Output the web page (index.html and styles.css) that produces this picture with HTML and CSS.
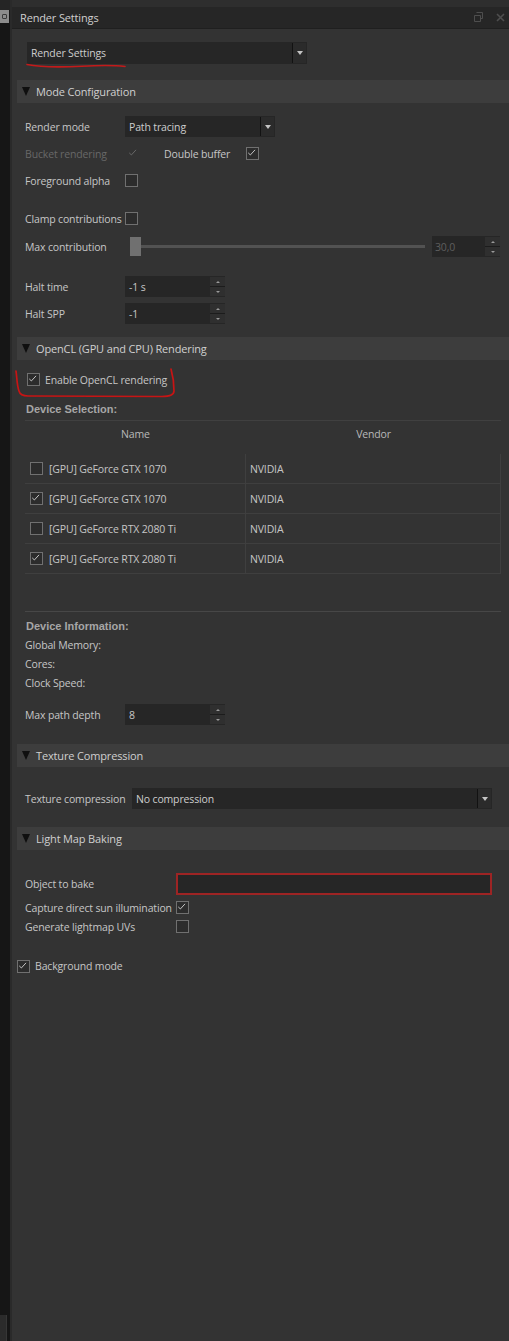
FILE: index.html
```html
<!DOCTYPE html>
<html>
<head>
<meta charset="utf-8">
<title>Render Settings</title>
<link rel="stylesheet" href="styles.css">
</head>
<body>
<div class="app">
  <aside class="dock-strip">
    <div class="strip-top"></div>
    <div class="strip-icon"><span></span></div>
    <div class="strip-fill"></div>
    <div class="strip-foot"></div>
  </aside>

  <main class="panel">
    <div class="topband"></div>
    <header class="titlebar">
      <span class="title">Render Settings</span>
      <span class="tb-icons">
        <svg class="tb-float" width="9" height="10" viewBox="0 0 9 10"><path d="M2.5 0.5h6v6h-2M0.5 3.5h6v6h-6z" fill="none" stroke="#4e4e4e" stroke-width="1"/></svg>
        <svg class="tb-close" width="9" height="9" viewBox="0 0 9 9"><path d="M1 1l7 7M8 1l-7 7" stroke="#4e4e4e" stroke-width="1.6"/></svg>
      </span>
    </header>

    <div class="content">
      <div class="preset-wrap">
        <div class="combo preset"><span class="combo-text">Render Settings</span><span class="combo-btn"><i class="tri"></i></span></div>
        <svg class="mark-underline" width="120" height="8" viewBox="0 0 120 8"><path d="M15 3.5 C 25 5.5, 45 6.5, 70 5.2 S 105 4.5, 113 5.5" fill="none" stroke="#c41a1a" stroke-width="1.6" stroke-linecap="round"/></svg>
      </div>

      <div class="section-h sh-mode"><i class="caret"></i>Mode Configuration</div>

      <div class="row r-render">
        <span class="lbl">Render mode</span>
        <div class="combo rmode"><span class="combo-text">Path tracing</span><span class="combo-btn"><i class="tri"></i></span></div>
      </div>
      <div class="row">
        <span class="lbl disabled">Bucket rendering</span>
        <span class="cb cb-disabled"><svg viewBox="0 0 13 13"><polyline points="2.5,6.8 5,9.2 10.5,3.2"/></svg></span>
        <span class="lbl-db">Double buffer</span>
        <span class="cb"><svg viewBox="0 0 13 13"><polyline points="2.5,6.8 5,9.2 10.5,3.2"/></svg></span>
      </div>
      <div class="row">
        <span class="lbl">Foreground alpha</span>
        <span class="cb"></span>
      </div>
      <div class="row r-clamp">
        <span class="lbl">Clamp contributions</span>
        <span class="cb"></span>
      </div>
      <div class="row r-max">
        <span class="lbl">Max contribution</span>
        <div class="slider"><span class="thumb"></span><span class="track"></span></div>
        <div class="spin spin-max disabled"><span class="spin-val">30,0</span><span class="spin-btns"><i class="up"></i><i class="dn"></i></span></div>
      </div>
      <div class="row r-halt">
        <span class="lbl">Halt time</span>
        <div class="spin"><span class="spin-val">-1 s</span><span class="spin-btns"><i class="up"></i><i class="dn"></i></span></div>
      </div>
      <div class="row">
        <span class="lbl">Halt SPP</span>
        <div class="spin"><span class="spin-val">-1</span><span class="spin-btns"><i class="up"></i><i class="dn"></i></span></div>
      </div>

      <div class="section-h sh-ocl"><i class="caret"></i>OpenCL (GPU and CPU) Rendering</div>

      <div class="row r-enable">
        <span class="cb"><svg viewBox="0 0 13 13"><polyline points="2.5,6.8 5,9.2 10.5,3.2"/></svg></span>
        <span class="cb-text">Enable OpenCL rendering</span>
        <svg class="mark-loop" width="170" height="34" viewBox="0 0 170 34"><path d="M4 5 C 5 12, 5 20, 7 25 C 8 29, 11 30, 16 30 L 150 30.5 C 158 30.5, 162 29, 162 25 C 162 18, 161 10, 159 3" fill="none" stroke="#c81414" stroke-width="1.7" stroke-linecap="round"/></svg>
      </div>

      <div class="subhead sh-devsel">Device Selection:</div>

      <div class="devices">
        <div class="dev-head"><span>Name</span><span>Vendor</span></div>
        <div class="dev-rows">
          <div class="dev-row"><span class="dev-name"><span class="cb"></span>[GPU] GeForce GTX 1070</span><span class="dev-vendor">NVIDIA</span></div>
          <div class="dev-row"><span class="dev-name"><span class="cb"><svg viewBox="0 0 13 13"><polyline points="2.5,6.8 5,9.2 10.5,3.2"/></svg></span>[GPU] GeForce GTX 1070</span><span class="dev-vendor">NVIDIA</span></div>
          <div class="dev-row"><span class="dev-name"><span class="cb"></span>[GPU] GeForce RTX 2080 Ti</span><span class="dev-vendor">NVIDIA</span></div>
          <div class="dev-row"><span class="dev-name"><span class="cb"><svg viewBox="0 0 13 13"><polyline points="2.5,6.8 5,9.2 10.5,3.2"/></svg></span>[GPU] GeForce RTX 2080 Ti</span><span class="dev-vendor">NVIDIA</span></div>
        </div>
      </div>

      <div class="divider"></div>

      <div class="info">
        <div class="subhead info-head">Device Information:</div>
        <div class="info-line">Global Memory:</div>
        <div class="info-line">Cores:</div>
        <div class="info-line">Clock Speed:</div>
      </div>

      <div class="row r-depth">
        <span class="lbl">Max path depth</span>
        <div class="spin"><span class="spin-val">8</span><span class="spin-btns"><i class="up"></i><i class="dn"></i></span></div>
      </div>

      <div class="section-h sh-tex"><i class="caret"></i>Texture Compression</div>

      <div class="row r-tex">
        <span class="lbl lbl-tex">Texture compression</span>
        <div class="combo tcomp"><span class="combo-text">No compression</span><span class="combo-btn"><i class="tri"></i></span></div>
      </div>

      <div class="section-h sh-lm"><i class="caret"></i>Light Map Baking</div>

      <div class="row r-obj">
        <span class="lbl lbl-lm">Object to bake</span>
        <div class="text-input invalid"></div>
      </div>
      <div class="row r-small r-capture">
        <span class="lbl lbl-lm">Capture direct sun illumination</span>
        <span class="cb"><svg viewBox="0 0 13 13"><polyline points="2.5,6.8 5,9.2 10.5,3.2"/></svg></span>
      </div>
      <div class="row r-small">
        <span class="lbl lbl-lm">Generate lightmap UVs</span>
        <span class="cb"></span>
      </div>

      <div class="row r-bg">
        <span class="cb"><svg viewBox="0 0 13 13"><polyline points="2.5,6.8 5,9.2 10.5,3.2"/></svg></span>
        <span class="cb-text">Background mode</span>
      </div>
    </div>
  </main>
</div>
</body>
</html>
```

FILE: styles.css
```css
* { box-sizing: border-box; margin: 0; padding: 0; }

html, body { height: 100%; }

body {
  background: #333333;
  color: #c6c6c6;
  font-family: "Open Sans", "Noto Sans", "DejaVu Sans", sans-serif;
  font-size: 10.5px;
  letter-spacing: -0.15px;
  overflow: hidden;
}

.app {
  display: flex;
  height: 1341px;
}

/* left dock strip */
.dock-strip {
  width: 12px;
  flex: none;
  display: flex;
  flex-direction: column;
  background: #161616;
  border-right: 2px solid #2a2a2a;
}
.strip-top { height: 10px; background: #252525; }
.strip-icon {
  height: 13px;
  width: 9px;
  background: #8c8c8c;
  display: flex;
  align-items: center;
  justify-content: center;
}
.strip-icon span {
  width: 5px;
  height: 5px;
  border: 1px solid #3a3a3a;
  border-radius: 1px;
}
.strip-fill { flex: 1; }
.strip-foot {
  height: 26px;
  width: 7px;
  margin-top: 3px;
  background: #2b2b2b;
  border-right: 1px solid #363636;
}

/* panel */
.panel {
  flex: 1;
  display: flex;
  flex-direction: column;
  min-width: 0;
}
.topband { height: 7px; background: #2e2e2e; }
.titlebar {
  height: 22px;
  background: #262626;
  border-bottom: 1px solid #1f1f1f;
  display: flex;
  align-items: center;
  justify-content: space-between;
  padding: 0 4px 1px 8px;
  font-size: 11px;
  color: #cfcfcf;
}
.tb-icons { display: flex; align-items: center; gap: 13px; }

.content {
  display: flex;
  flex-direction: column;
}

/* preset combo with annotation */
.preset-wrap {
  position: relative;
  margin-top: 13px;
  height: 22px;
}
.mark-underline {
  position: absolute;
  left: 0;
  top: 19px;
  overflow: visible;
}

.combo {
  display: flex;
  align-items: stretch;
  background: #262626;
  height: 22px;
}
.combo-text {
  flex: 1;
  display: flex;
  align-items: center;
  padding-left: 4px;
  color: #cdcdcd;
}
.combo-btn {
  width: 14px;
  flex: none;
  border-left: 1px solid #121212;
  background: #2b2b2b;
  display: flex;
  align-items: center;
  justify-content: center;
  margin: 1px 1px 1px 0;
}
.tri {
  width: 0;
  height: 0;
  border-left: 3.5px solid transparent;
  border-right: 3.5px solid transparent;
  border-top: 4px solid #c4c4c4;
}
.preset { margin-left: 15px; width: 280px; }
.rmode { width: 150px; height: 21px; }
.tcomp { width: 360px; height: 21px; }

/* section headers */
.section-h {
  margin-left: 5px;
  height: 23px;
  background: #3d3d3d;
  display: flex;
  align-items: center;
  padding-left: 5px;
  color: #d0d0d0;
  font-size: 11px;
}
.caret {
  width: 0;
  height: 0;
  border-left: 4.5px solid transparent;
  border-right: 4.5px solid transparent;
  border-top: 9px solid #0f0f0f;
  margin-right: 6px;
}
.sh-mode { margin-top: 16px; }
.sh-ocl { margin-top: 10px; }
.sh-tex { margin-top: 16px; }
.sh-lm { margin-top: 15px; }

/* rows */
.row {
  display: flex;
  align-items: center;
  height: 27px;
  padding-left: 13px;
  flex: none;
}
.r-render { margin-top: 10px; }
.r-clamp { margin-top: 11px; }
.r-max { margin-top: 1px; }
.r-halt { margin-top: 13px; }
.r-depth { margin-top: 9px; }
.r-tex { margin-top: 18px; }
.r-obj { margin-top: 21px; height: 26px; }
.r-small { height: 19px; }
.r-capture { margin-top: 1px; }
.r-bg { margin-top: 20px; height: 20px; padding-left: 5px; }

.lbl { width: 100px; flex: none; white-space: nowrap; }
.lbl-tex { width: 107px; }
.lbl-lm { width: 151px; }
.disabled { color: #686868; }

.cb {
  width: 13px;
  height: 13px;
  flex: none;
  border: 1px solid #707070;
  background: #2c2c2c;
  display: inline-flex;
}
.cb svg { width: 11px; height: 11px; }
.cb polyline {
  fill: none;
  stroke: #cfcfcf;
  stroke-width: 1.1;
  transform: translate(-1px, -1px);
}
.cb-disabled {
  border-color: #333333;
  background: transparent;
  margin-left: 2px;
}
.cb-disabled polyline { stroke: #6a6a6a; }
.lbl-db { margin-left: 24px; width: 82px; }

.cb-text { margin-left: 5px; }

/* slider */
.slider {
  display: flex;
  align-items: center;
  margin-left: 5px;
  width: 295px;
}
.thumb {
  width: 11px;
  height: 19px;
  background: #707070;
  flex: none;
}
.track {
  flex: 1;
  height: 3px;
  background: #525252;
}

/* spin boxes */
.spin {
  width: 100px;
  height: 21px;
  background: #262626;
  display: flex;
}
.spin-max { width: 68px; margin-left: 7px; }
.spin-val {
  flex: 1;
  display: flex;
  align-items: center;
  padding-left: 4px;
}
.spin-max .spin-val { color: #5e5e5e; padding-left: 3px; }
.spin-btns {
  width: 15px;
  display: flex;
  flex-direction: column;
  background: #2f2f2f;
  margin: 1px 0 1px 0;
}
.spin-btns i {
  flex: 1;
  display: flex;
  align-items: center;
  justify-content: center;
}
.spin-btns .up { border-bottom: 1px solid #1c1c1c; }
.spin-btns .up::after {
  content: "";
  border-left: 2px solid transparent;
  border-right: 2px solid transparent;
  border-bottom: 2px solid #9a9a9a;
}
.spin-btns .dn::after {
  content: "";
  border-left: 2px solid transparent;
  border-right: 2px solid transparent;
  border-top: 2px solid #9a9a9a;
}

/* OpenCL enable with annotation */
.r-enable {
  margin-top: 6px;
  padding-left: 15px;
  position: relative;
}
.mark-loop {
  position: absolute;
  left: 0;
  top: 0;
  overflow: visible;
}

.subhead {
  font-family: "Liberation Sans", Arial, sans-serif;
  font-weight: bold;
  font-size: 11px;
  letter-spacing: 0;
  color: #a6a6a6;
}
.sh-devsel {
  margin-top: 4px;
  margin-left: 13px;
  margin-right: 8px;
  height: 24px;
  padding-left: 1px;
  padding-top: 1px;
  display: flex;
  align-items: center;
  border-bottom: 1px solid #404040;
}

/* device table */
.devices {
  margin-left: 13px;
  width: 476px;
}
.dev-head {
  display: grid;
  grid-template-columns: 221px 1fr;
  height: 26px;
  align-items: center;
  text-align: center;
  color: #b9b9b9;
  margin-bottom: 7px;
}
.dev-row {
  display: grid;
  grid-template-columns: 221px 1fr;
  height: 30px;
  border-bottom: 1px solid #3f3f3f;
}
.dev-name {
  display: flex;
  align-items: center;
  gap: 6px;
  padding-left: 5px;
  border-right: 1px solid #3f3f3f;
}
.dev-vendor {
  display: flex;
  align-items: center;
  padding-left: 4px;
  border-right: 1px solid #3f3f3f;
}

.divider {
  margin: 37px 8px 0 13px;
  height: 1px;
  background: #474747;
}

.info {
  padding-left: 13px;
  margin-top: 4px;
}
.info-head { height: 19px; display: flex; align-items: center; padding-left: 1px; }
.info-line { height: 19px; display: flex; align-items: center; }

.text-input {
  width: 316px;
  height: 22px;
  background: #262626;
}
.invalid { border: 2px solid #9e2424; }
```
